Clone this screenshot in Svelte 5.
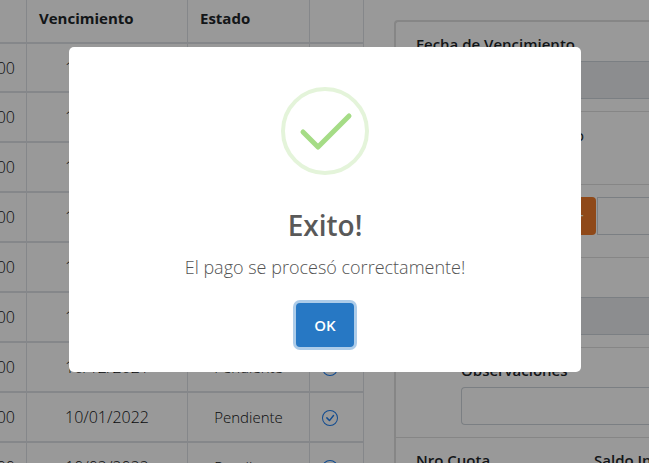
<script>
  const rows = [
    '10/06/2021', '10/07/2021', '10/08/2021', '10/09/2021', '10/10/2021',
    '10/11/2021', '10/12/2021', '10/01/2022', '10/02/2022'
  ];
</script>

<div class="page">
  <table>
    <thead>
      <tr><th class="amount"></th><th class="date">Vencimiento</th><th class="state">Estado</th><th class="action"></th></tr>
    </thead>
    <tbody>
      {#each rows as date}
        <tr>
          <td class="amount">00</td>
          <td class="date">{date}</td>
          <td class="state">Pendiente</td>
          <td class="action">
            <button class="check" aria-label="Pagar">
              <svg viewBox="0 0 16 16" width="16" height="16" fill="#1a7cf0">
                <path d="M8 15A7 7 0 1 1 8 1a7 7 0 0 1 0 14zm0 1A8 8 0 1 0 8 0a8 8 0 0 0 0 16z" />
                <path d="M10.97 4.97a.235.235 0 0 0-.02.022L7.477 9.417 5.384 7.323a.75.75 0 0 0-1.06 1.06L6.97 11.03a.75.75 0 0 0 1.079-.02l3.992-4.99a.75.75 0 0 0-1.071-1.05z" />
              </svg>
            </button>
          </td>
        </tr>
      {/each}
    </tbody>
  </table>

  <form class="card">
    <div class="group">
      <label for="due">Fecha de Vencimiento</label>
      <input id="due" disabled />
    </div>
    <div class="group switch"><span>o</span></div>
    <div class="group amount-row">
      <button type="button" class="add">+</button>
      <input aria-label="Monto" />
    </div>
    <div class="group">
      <label for="total">Total</label>
      <input id="total" disabled />
    </div>
    <div class="group notes">
      <label for="notes">Observaciones</label>
      <input id="notes" />
    </div>
    <div class="group summary"><b>Nro Cuota</b><b>Saldo Inicial</b></div>
  </form>
</div>

<div class="overlay">
  <div class="modal" role="dialog" aria-modal="true" aria-labelledby="title">
    <svg class="success" viewBox="0 0 88 88" width="88" height="88" fill="none">
      <circle cx="44" cy="44" r="42" stroke="#e4f4da" stroke-width="4" />
      <path d="M22 45l15 15L68 29" stroke="#a5dc86" stroke-width="5" stroke-linecap="round" stroke-linejoin="round" />
    </svg>
    <h2 id="title">Exito!</h2>
    <p>El pago se procesó correctamente!</p>
    <button class="ok">OK</button>
  </div>
</div>

<style>
  :global(body) {
    margin: 0;
    overflow: hidden;
    background: #fff;
    color: #212529;
    font: 400 16px/24px "Open Sans", "Noto Sans", sans-serif;
  }
  * { box-sizing: border-box; }
  button, input { font: inherit; }
  .page {
    display: flex;
    align-items: flex-start;
    gap: 30px;
    height: 100vh;
    overflow: hidden;
  }
  table {
    flex: none;
    border-collapse: separate;
    border-spacing: 0;
    table-layout: fixed;
    width: 364px;
  }
  th, td {
    height: 50px;
    padding: 0 12px;
    border-right: 1px solid #dee2e6;
    border-bottom: 2px solid #dee2e6;
    text-align: center;
    font-size: 15px;
    font-weight: 300;
  }
  td { color: #101214; }
  td.amount, td.date { font-size: 16px; }
  th {
    height: 44px;
    padding-bottom: 6px;
    text-align: left;
    font-weight: 700;
  }
  tbody tr:first-child td { height: 49px; }
  .amount { width: 27px; padding: 0 12px 0 0; text-align: right; direction: rtl; }
  .date { width: 161px; }
  .state { width: 122px; }
  .action { width: 54px; padding: 0 12px; text-align: left; }
  .check {
    display: block;
    margin-top: 2px;
    padding: 0;
    border: 0;
    background: none;
  }
  .check svg { display: block; }
  .card {
    flex: 1;
    min-width: 0;
    margin-top: 20px;
    border: 2px solid #dfdfdf;
    border-right: 0;
    border-radius: 4px 0 0 0;
  }
  .group {
    padding: 11px 0 12px 20px;
    border-bottom: 1px solid #dfdfdf;
  }
  .group label, .group b {
    display: block;
    margin-bottom: 6px;
    font-size: 15px;
    font-weight: 600;
    line-height: 22px;
    white-space: nowrap;
  }
  .group input {
    display: block;
    width: 100%;
    height: 38px;
    border: 1px solid #ced4da;
    border-right: 0;
    border-radius: 4px 0 0 4px;
    background: #fff;
  }
  .group input:disabled { background: #e9ecef; }
  .switch { height: 73px; }
  .switch span { display: block; width: 168px; text-align: right; font-size: 15px; }
  .group.amount-row { display: flex; gap: 1px; height: 73px; padding-top: 12px; }
  .group.amount-row input { flex: 1; min-width: 0; border-radius: 0; }
  .add {
    width: 180px;
    height: 38px;
    padding: 0 12px;
    border: 0;
    border-radius: 4px;
    background: #ee7b2b;
    color: #fff;
    text-align: right;
  }
  .notes { padding-left: 65px; }
  .summary { display: flex; }
  .summary b { flex: 0 0 178px; }
  .overlay {
    position: fixed;
    inset: 0;
    display: flex;
    justify-content: center;
    align-items: flex-start;
    padding: 47px 0 0 1px;
    background: rgba(0, 0, 0, 0.4);
  }
  .modal {
    display: flex;
    flex-direction: column;
    align-items: center;
    width: 512px;
    max-width: 100%;
    padding: 40px 20px 25px;
    border-radius: 5px;
    background: #fff;
  }
  .success { display: block; }
  h2 {
    margin: 30px 0 10px;
    color: #595959;
    font-size: 28px;
    font-weight: 600;
    line-height: 40px;
  }
  p {
    margin: 0 0 24px;
    color: #545454;
    font-size: 18px;
    font-weight: 300;
    line-height: 24px;
  }
  .ok {
    width: 58px;
    height: 44px;
    padding: 0;
    border: 0;
    border-radius: 4px;
    background: #2778c4;
    box-shadow: 0 0 0 3px rgba(39, 120, 196, 0.38);
    color: #fff;
    font-size: 15px;
    font-weight: 600;
  }
</style>
